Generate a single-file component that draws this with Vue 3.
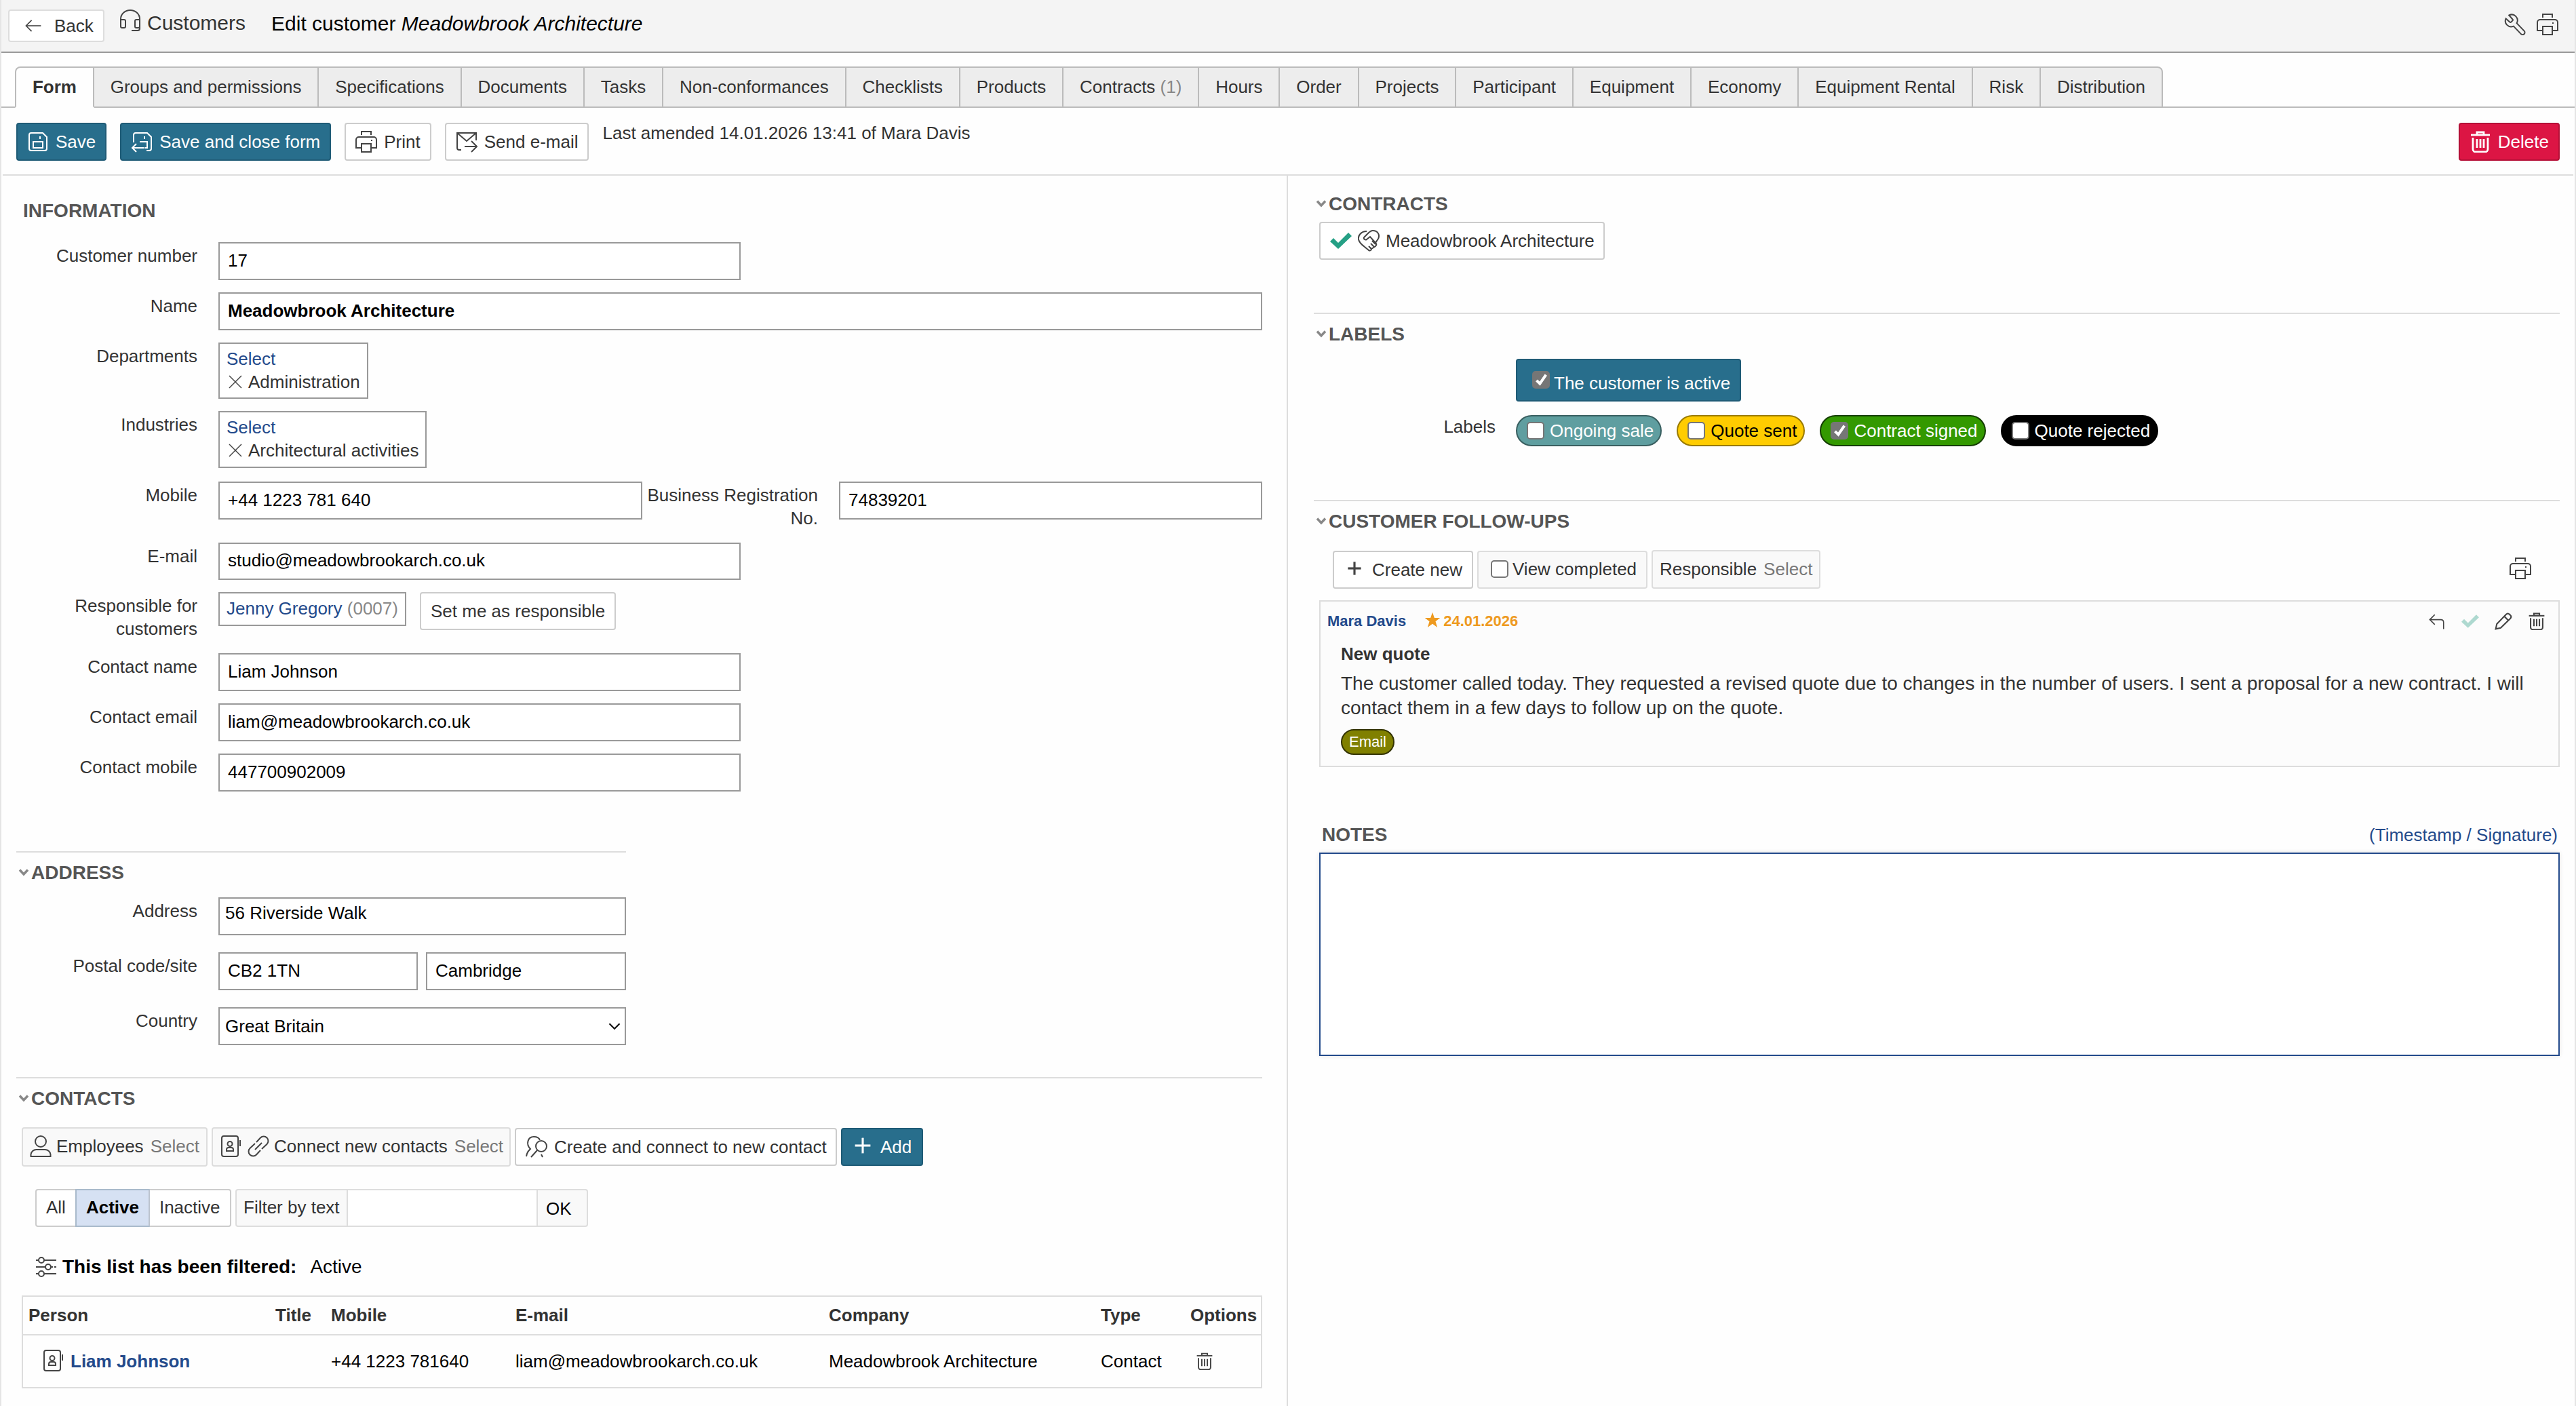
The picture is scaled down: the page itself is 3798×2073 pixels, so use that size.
<template>
  <div class="page">
    <header class="topbar">
      <button class="back-btn"><Icon name="back" :size="26" /><span>Back</span></button>
      <Icon name="headset" class="module-icon" />
      <span class="module">Customers</span>
      <span class="page-title">Edit customer <em>Meadowbrook Architecture</em></span>
      <div class="top-tools">
        <Icon name="wrench" />
        <Icon name="printer" />
      </div>
    </header>

    <nav class="tabs">
      <div v-for="(tab, i) in tabs" :key="tab.title" class="tab" :class="{ active: i === 0 }">
        {{ tab.title }}<span v-if="tab.count" class="count">&nbsp;({{ tab.count }})</span>
      </div>
    </nav>

    <div class="toolbar">
      <button class="btn primary"><Icon name="save" />Save</button>
      <button class="btn primary"><Icon name="saveClose" />Save and close form</button>
      <button class="btn"><Icon name="printer" />Print</button>
      <button class="btn"><Icon name="send" />Send e-mail</button>
      <span class="amended">Last amended 14.01.2026 13:41 of Mara Davis</span>
      <button class="btn danger"><Icon name="trash" :stroke="2.8" />Delete</button>
    </div>

    <div class="columns">
      <main class="col left">
        <h2 class="plain-title">INFORMATION</h2>
        <div class="row">
          <label>Customer number</label>
          <input class="w-half" v-model="form.number" />
        </div>
        <div class="row">
          <label>Name</label>
          <input class="w-full strong" v-model="form.name" />
        </div>
        <div class="row">
          <label>Departments</label>
          <div class="picker departments">
            <a>Select</a>
            <div class="picked"><Icon name="cross" :size="24" />Administration</div>
          </div>
        </div>
        <div class="row industries-row">
          <label>Industries</label>
          <div class="picker industries">
            <a>Select</a>
            <div class="picked"><Icon name="cross" :size="24" />Architectural activities</div>
          </div>
        </div>
        <div class="row">
          <label>Mobile</label>
          <input class="w-mobile" v-model="form.mobile" />
          <label class="second">Business Registration No.</label>
          <input class="w-reg" v-model="form.regNo" />
        </div>
        <div class="row">
          <label>E-mail</label>
          <input class="w-half short" v-model="form.email" />
        </div>
        <div class="row">
          <label>Responsible for customers</label>
          <div class="picker responsible"><a>Jenny Gregory</a> <span class="muted">(0007)</span></div>
          <button class="btn set-me">Set me as responsible</button>
        </div>
        <div class="row">
          <label>Contact name</label>
          <input class="w-half" v-model="form.contactName" />
        </div>
        <div class="row">
          <label>Contact email</label>
          <input class="w-half" v-model="form.contactEmail" />
        </div>
        <div class="row">
          <label>Contact mobile</label>
          <input class="w-half" v-model="form.contactMobile" />
        </div>

        <section class="address">
          <h2><Icon name="fold" :size="16" :stroke="7" />ADDRESS</h2>
          <div class="row">
            <label>Address</label>
            <textarea class="street" v-model="form.street"></textarea>
          </div>
          <div class="row">
            <label>Postal code/site</label>
            <input class="w-postal" v-model="form.postal" />
            <input class="w-city" v-model="form.city" />
          </div>
          <div class="row">
            <label>Country</label>
            <div class="select">{{ form.country }}<Icon name="down" :size="20" :stroke="3.4" /></div>
          </div>
        </section>

        <section class="contacts">
          <h2><Icon name="fold" :size="16" :stroke="7" />CONTACTS</h2>
          <div class="contact-tools">
            <div class="chip employees"><Icon name="user" />Employees <span class="pick">Select</span></div>
            <div class="chip connect">
              <Icon name="card" /><Icon name="link" />Connect new contacts <span class="pick">Select</span>
            </div>
            <button class="btn create"><Icon name="people" />Create and connect to new contact</button>
            <button class="btn primary add"><Icon name="plus" :size="26" :stroke="3.8" />Add</button>
          </div>
          <div class="filters">
            <div class="segments">
              <span>All</span>
              <span class="on">Active</span>
              <span>Inactive</span>
            </div>
            <div class="filter-box">
              <span class="filter-label">Filter by text</span>
              <span class="filter-input"></span>
              <span class="filter-ok">OK</span>
            </div>
          </div>
          <div class="filtered"><Icon name="sliders" /><b>This list has been filtered:</b><span>Active</span></div>

          <div class="table">
            <div class="tr th">
              <span v-for="c in columns" :key="c">{{ c }}</span>
            </div>
            <div class="tr">
              <span class="person"><Icon name="card" /><a>Liam Johnson</a></span>
              <span></span>
              <span>+44 1223 781640</span>
              <span>liam@meadowbrookarch.co.uk</span>
              <span>Meadowbrook Architecture</span>
              <span>Contact</span>
              <span class="options"><Icon name="trash" :size="26" :stroke="2.3" /></span>
            </div>
          </div>
        </section>
      </main>

      <aside class="col right">
        <h2 class="first"><Icon name="fold" :size="16" :stroke="7" />CONTRACTS</h2>
        <button class="btn contract">
          <Icon name="tick" class="tick" /><Icon name="handshake" />Meadowbrook Architecture
        </button>

        <section class="labels">
          <h2><Icon name="fold" :size="16" :stroke="7" />LABELS</h2>
          <div class="is-active">
            <span class="box checked"><Icon name="check" :size="26" :stroke="5" /></span>
            <span class="is-active-text">The customer is active</span>
          </div>
          <div class="label-row">
            <label>Labels</label>
            <div v-for="l in labels" :key="l.title" class="pill" :class="l.kind">
              <span class="box" :class="{ checked: l.checked }"><Icon v-if="l.checked" name="check" :size="26" :stroke="5" /></span>{{ l.title }}
            </div>
          </div>
        </section>

        <section class="follow-ups">
          <h2><Icon name="fold" :size="16" :stroke="7" />CUSTOMER FOLLOW-UPS</h2>
          <div class="follow-tools">
            <button class="btn create-new"><Icon name="plus" :size="22" :stroke="4.6" />Create new</button>
            <div class="chip view-completed"><span class="box"></span>View completed</div>
            <div class="chip resp">Responsible <span class="pick">Select</span></div>
            <Icon name="printer" class="follow-print" />
          </div>
          <article class="card">
            <div class="card-head">
              <a>Mara Davis</a>
              <Icon name="star" :size="24" class="star" />
              <span class="date">24.01.2026</span>
              <div class="card-icons">
                <Icon name="reply" :size="26" />
                <Icon name="tick" :size="26" class="tick faded" />
                <Icon name="pencil" :size="26" :stroke="2.6" />
                <Icon name="trash" :size="26" :stroke="2.6" />
              </div>
            </div>
            <div class="card-title">New quote</div>
            <p>The customer called today. They requested a revised quote due to changes in the number of users. I sent a proposal for a new contract. I will contact them in a few days to follow up on the quote.</p>
            <span class="tag">Email</span>
          </article>
        </section>

        <div class="notes-head">
          <h2>NOTES</h2>
          <a>(Timestamp / Signature)</a>
        </div>
        <textarea class="notes"></textarea>
      </aside>
    </div>
  </div>
</template>

<script setup>
import { h, reactive } from 'vue';

// All icons share a 32x32 grid
const shapes = {
  back: ['M3 16h27', 'M13 6L3 16l10 10'],
  headset: ['M2 15v-1a14 13 0 0 1 28 0v1', 'M2 15h5a2 2 0 0 1 2 2v8a2 2 0 0 1-2 2H4a2 2 0 0 1-2-2z', 'M30 15h-5a2 2 0 0 0-2 2v8a2 2 0 0 0 2 2h3a2 2 0 0 0 2-2z', 'M30 25v3a3 3 0 0 1-3 3h-9'],
  wrench: ['M12.5 8.5a1.4 1.4 0 0 1 0 1.9l-2.2 2.1a1.4 1.4 0 0 1-1.9 0L2.6 7.4a8.5 8.5 0 0 0 11.3 11.2l11 11.5a3.2 3.2 0 0 0 4.7-4.5L18.6 14.2A8.5 8.5 0 0 0 7.3 2.5z'],
  printer: ['M9 6V1h14v5', 'M9 25H1V13a4 4 0 0 1 4-4h22a4 4 0 0 1 4 4v12h-8', 'M9 19h14v12H9z', 'M23 14h2'],
  save: ['M6 3h17l6 6v17a3 3 0 0 1-3 3H6a3 3 0 0 1-3-3V6a3 3 0 0 1 3-3z', 'M9 25v-9h14v9z', 'M19 8v4'],
  saveClose: ['M4 17V6a3 3 0 0 1 3-3h17l6 6v17a3 3 0 0 1-3 3h-4', 'M13 16h11v9h-4', 'M20 8v4', 'M19 25H2', 'M8 19l-6 6 6 6'],
  send: ['M30 14V3H2v22a3 3 0 0 0 3 3h3', 'M2 3l14 12L30 3', 'M13 23h18', 'M23 15l8 8-8 8'],
  trash: ['M11 6V2h10v4', 'M2 6h28', 'M5 10v17a4 4 0 0 0 4 4h14a4 4 0 0 0 4-4V10', 'M11 12v13M16 12v13M21 12v13'],
  cross: ['M4 4l24 24', 'M28 4L4 28'],
  fold: ['M4 9l12 13L28 9'],
  down: ['M4 10l12 12 12-12'],
  user: ['M16 1a8 8 0 1 1 0 16 8 8 0 1 1 0-16z', 'M1.5 31v-3a8 8 0 0 1 8-7h13a8 8 0 0 1 8 7v3z'],
  card: ['M4 1h18a3 3 0 0 1 3 3v24a3 3 0 0 1-3 3H4a3 3 0 0 1-3-3V4a3 3 0 0 1 3-3z', 'M13 9a3.5 3.5 0 1 1 0 7 3.5 3.5 0 1 1 0-7z', 'M8 23v-2a3 3 0 0 1 3-3h4a3 3 0 0 1 3 3v2z', 'M28 7v9'],
  link: ['M13 10l6-6.500a6.500 6.500 0 0 1 9.500 9.500L21 20', 'M19 22l-6 6.500a6.500 6.500 0 0 1-9.500-9.500L11 12', 'M11 21L21 11'],
  people: ['M1 30c1-6 3-8 6-11C0 12 3 1 12 1c5 0 8 2 9 5', 'M23 7a8 8 0 1 1 0 16 8 8 0 1 1 0-16z', 'M17 21L8 31', 'M23 27l2 4'],
  plus: ['M16 2v28', 'M2 16h28'],
  sliders: ['M1 6h4M13 6h18', 'M9 2a4 4 0 1 1 0 8 4 4 0 1 1 0-8z', 'M1 16h14M23 16h3M28 16h3', 'M19 12a4 4 0 1 1 0 8 4 4 0 1 1 0-8z', 'M1 26h4M13 26h18', 'M9 22a4 4 0 1 1 0 8 4 4 0 1 1 0-8z'],
  handshake: ['M13 2C5 2 0 8 1 14c1 5 5 8 9 11l6 5c2 1 4 0 4-2l6-4c2-2 1-4 0-5l4-6c3-6-1-12-8-12-3 0-5 2-7 4l-6 6c-1 3 2 4 4 3l5-4 8 9', 'M20 28l-4-4M24 25l-5-5M26 21l-5-5'],
  check: ['M8 17l6 6L25 7'],
  reply: ['M12 4L3 13l9 9', 'M3 13h20q5 0 5 5v12'],
  pencil: ['M2 30l2-9L21 3.5q3-3 6 0l1.500 1.500q3 3 0 6L11 28z', 'M17.5 7l7.500 7.500'],
};

// Solid icons are filled instead of stroked
const solids = {
  tick: 'M0 17l5-5 7 7L27 4l5 5-20 19z',
  star: 'M16 1l3.8 11H31l-9 7 3.5 11.5L16 23.5 6.5 30.5 10 19l-9-7h11.2z',
};

const Icon = (props) =>
  h(
    'svg',
    {
      class: 'icon',
      viewBox: '0 0 32 32',
      width: props.size || 32,
      height: props.size || 32,
      fill: 'none',
      stroke: 'currentColor',
      'stroke-width': props.stroke || 2,
    },
    solids[props.name]
      ? [h('path', { d: solids[props.name], fill: 'currentColor', stroke: 'none' })]
      : shapes[props.name].map((d) => h('path', { d }))
  );
Icon.props = ['name', 'size', 'stroke'];

const tabs = [
  { title: 'Form' },
  { title: 'Groups and permissions' },
  { title: 'Specifications' },
  { title: 'Documents' },
  { title: 'Tasks' },
  { title: 'Non-conformances' },
  { title: 'Checklists' },
  { title: 'Products' },
  { title: 'Contracts', count: 1 },
  { title: 'Hours' },
  { title: 'Order' },
  { title: 'Projects' },
  { title: 'Participant' },
  { title: 'Equipment' },
  { title: 'Economy' },
  { title: 'Equipment Rental' },
  { title: 'Risk' },
  { title: 'Distribution' },
];

const form = reactive({
  number: '17',
  name: 'Meadowbrook Architecture',
  mobile: '+44 1223 781 640',
  regNo: '74839201',
  email: 'studio@meadowbrookarch.co.uk',
  contactName: 'Liam Johnson',
  contactEmail: 'liam@meadowbrookarch.co.uk',
  contactMobile: '447700902009',
  street: '56 Riverside Walk',
  postal: 'CB2 1TN',
  city: 'Cambridge',
  country: 'Great Britain',
});

const columns = ['Person', 'Title', 'Mobile', 'E-mail', 'Company', 'Type', 'Options'];

const labels = [
  { title: 'Ongoing sale', kind: 'teal', checked: false },
  { title: 'Quote sent', kind: 'yellow', checked: false },
  { title: 'Contract signed', kind: 'green', checked: true },
  { title: 'Quote rejected', kind: 'black', checked: false },
];
</script>

<style>
body {
  background: #fff;
}
</style>

<style scoped>
.page,
.page * {
  box-sizing: border-box;
}

.page {
  display: flex;
  flex-direction: column;
  width: 3798px;
  height: 2073px;
  overflow: hidden;
  border-left: 2px solid #e5e5e5;
  border-right: 2px solid #e5e5e5;
  background: #fefefe;
  color: #333;
  font-family: "Liberation Sans", Arial, Helvetica, sans-serif;
  font-size: 26px;
  line-height: 34px;
}

.icon {
  display: block;
  flex-shrink: 0;
  color: #444;
}

button,
input,
textarea {
  margin: 0;
  font: inherit;
  color: inherit;
}

a {
  color: #234a8b;
}

h2 {
  display: flex;
  align-items: center;
  margin: 0;
  color: #555;
  font-size: 28px;
  font-weight: bold;
  line-height: 34px;
}

h2 .icon {
  margin: -3px 3px 0 3px;
  color: #888;
}

/* Header */
.topbar {
  display: flex;
  align-items: flex-start;
  height: 78px;
  padding: 14px 24px 0 10px;
  border-bottom: 2px solid #999;
  background: #f4f4f4;
}

.back-btn {
  display: flex;
  align-items: center;
  gap: 18px;
  width: 142px;
  height: 48px;
  padding: 0 0 0 22px;
  border: 2px solid #ddd;
  border-radius: 4px;
  background: #fff;
}

.module-icon {
  margin-left: 22px;
}

.module {
  margin: 3px 0 0 9px;
  font-size: 30px;
}

.page-title {
  margin: 4px 0 0 38px;
  color: #000;
  font-size: 30px;
}

.top-tools {
  display: flex;
  gap: 16px;
  margin: 6px 0 0 auto;
}

/* Tabs */
.tabs {
  display: flex;
  height: 81px;
  padding: 20px 0 0 20px;
  background: linear-gradient(#bbb, #bbb) 0 79px / 100% 2px no-repeat;
}

.tab {
  height: 61px;
  padding: 11px 23.9px 0;
  border: solid #bbb;
  border-width: 2px 2px 2px 0;
  background: #ededed;
  white-space: nowrap;
}

.tab.active {
  border-left-width: 2px;
  border-bottom-color: #fefefe;
  border-radius: 8px 0 0 0;
  background: #fefefe;
  font-weight: bold;
}

.tab:last-child {
  border-radius: 0 8px 0 0;
}

.count {
  color: #888;
}

/* Buttons */
.btn {
  display: flex;
  align-items: center;
  height: 56px;
  padding: 0 14px;
  border: 2px solid #ccc;
  border-radius: 4px;
  background: #fff;
  white-space: nowrap;
}

.primary {
  border-color: #1f5b76;
  background: #286e8c;
  color: #fff;
}

.danger {
  border-color: #b50f37;
  background: #dc1544;
  color: #fff;
}

.primary .icon,
.danger .icon {
  color: #fff;
}

.toolbar {
  display: flex;
  height: 100px;
  margin: 0 2px;
  padding: 22px 20px 0;
  border-bottom: 2px solid #ddd;
}

.toolbar .btn {
  margin-right: 20px;
}

.toolbar .icon {
  margin-right: 10px;
}

.amended {
  line-height: 31px;
}

.toolbar .danger {
  margin: 0 0 0 auto;
}

/* Columns */
.columns {
  display: flex;
  flex: 1;
}

.left {
  width: 1897px;
  padding: 35px 0 0 22px;
  border-right: 2px solid #ddd;
}

.right {
  width: 1897px;
  padding: 25px 22px 0 38px;
}

.plain-title {
  margin: 0 0 29px 10px;
}

.row {
  display: flex;
  align-items: flex-start;
  margin-bottom: 18px;
}

.row label {
  width: 260px;
  margin: 0 31px 0 7px;
  padding: 3px 0 1px;
  text-align: right;
}

.row label.second {
  width: 259px;
  margin: 0 31px 0 0;
}

input {
  height: 56px;
  padding: 0 12px 2px;
  border: 2px solid #999;
  border-radius: 0;
  background: #fff;
  color: #000;
  outline: none;
}

.strong {
  font-weight: bold;
}

.short {
  height: 55px;
}

.w-half {
  width: 770px;
}

.w-full {
  width: 1539px;
}

.w-mobile {
  width: 625px;
}

.w-reg {
  width: 624px;
}

.w-postal {
  width: 294px;
}

.w-city {
  width: 295px;
  margin-left: 12px;
}

.picker {
  padding: 5px 10px 0;
  border: 2px solid #999;
  background: #fff;
  white-space: nowrap;
}

.picked {
  display: flex;
  align-items: center;
}

.picked .icon {
  margin: 0 7px 0 1px;
}

.departments {
  width: 221px;
  height: 83px;
}

.industries {
  width: 307px;
  height: 84px;
}

.industries-row {
  margin-bottom: 20px;
}

.responsible {
  width: 277px;
  height: 50px;
}

.muted {
  color: #888;
}

.set-me {
  width: 289px;
  margin-left: 20px;
  padding-top: 0;
}

.left section,
.right section {
  border-top: 2px solid #ddd;
}

section h2 {
  padding-top: 13px;
}

.address {
  width: 899px;
  margin-top: 88px;
}

.address .row {
  margin-bottom: 25px;
}

.address h2 {
  margin-bottom: 19px;
}

.street {
  width: 601px;
  height: 56px;
  padding: 4px 8px;
  border: 2px solid #999;
  background: #fff;
  color: #000;
  resize: none;
  overflow: hidden;
}

.select {
  display: flex;
  align-items: center;
  justify-content: space-between;
  width: 601px;
  height: 56px;
  padding: 0 5px 0 8px;
  border: 2px solid #999;
  background: #fff;
  color: #000;
}

.select .icon {
  color: #111;
}

/* Contacts */
.contacts {
  width: 1837px;
  margin-top: 47px;
}

.contact-tools {
  display: flex;
  align-items: center;
  gap: 6px;
  margin: 25px 0 0 8px;
}

.chip {
  display: flex;
  align-items: center;
  height: 58px;
  border: 2px solid #ddd;
  border-radius: 4px;
  background: #f9f9f9;
  white-space: nowrap;
}

.pick {
  margin-left: 10px;
  color: #777;
}

.employees {
  width: 274px;
  padding: 0 0 2px 10px;
}

.employees .icon {
  margin-right: 7px;
}

.connect {
  width: 441px;
  padding: 0 0 2px 12px;
}

.connect .icon {
  margin-right: 7px;
}

.create {
  width: 475px;
}

.create .icon {
  margin-right: 10px;
}

.add {
  width: 121px;
  padding-left: 17px;
}

.add .icon {
  margin: -4px 13px 0 0;
}

.filters {
  display: flex;
  gap: 6px;
  height: 56px;
  margin: 33px 0 0 28px;
}

.segments {
  display: flex;
  width: 289px;
  border: 2px solid #ccc;
  border-radius: 4px;
  background: #fff;
}

.segments span {
  margin: -2px 0;
  padding: 10px 14px 0;
}

.segments .on {
  width: 110px;
  border: 2px solid #a9bacb;
  border-right-color: #bcc4cf;
  background: #d6e1f3;
  color: #000;
  font-weight: bold;
  padding-top: 8px;
}

.filter-box {
  display: flex;
  width: 520px;
  border: 2px solid #ddd;
  border-radius: 4px;
  background: #f9f9f9;
}

.filter-label {
  width: 162px;
  padding: 8px 0 0 10px;
}

.filter-input {
  width: 282px;
  border: 2px solid #ddd;
  border-width: 0 2px;
  background: #fff;
}

.filter-ok {
  padding: 10px 0 0 12px;
  color: #000;
}

.filtered {
  display: flex;
  align-items: center;
  margin: 42px 0 25px 28px;
  color: #000;
  font-size: 28px;
}

.filtered b {
  margin: 0 20px 0 8px;
}

.table {
  width: 1829px;
  margin-left: 8px;
  border: 2px solid #ddd;
}

.tr {
  display: grid;
  grid-template-columns: 364px 82px 272px 462px 401px 132px auto;
  align-items: center;
  height: 76px;
  padding-left: 8px;
  color: #000;
  white-space: nowrap;
}

.th {
  height: 57px;
  border-bottom: 2px solid #ddd;
  color: #333;
  font-weight: bold;
}

.th span {
  margin-top: -1px;
}

.person {
  display: flex;
  gap: 8px;
  padding-left: 22px;
  font-weight: bold;
}

.options {
  padding-left: 8px;
}

/* Right column */
.first {
  margin-bottom: 9px;
}

.contract {
  width: 421px;
  margin: 0 0 78px 8px;
}

.contract .icon {
  margin-right: 9px;
}

.icon.tick {
  color: #25a085;
}

.icon.faded {
  color: #aed9d0;
}

.is-active {
  display: flex;
  width: 332px;
  height: 63px;
  margin: 19px 0 20px 298px;
  padding: 16px 0 0 22px;
  border: 2px solid #1f5b76;
  border-radius: 4px;
  background: #286e8c;
  color: #fff;
}

.is-active-text {
  margin-left: 6px;
  padding-top: 1px;
}

.box {
  flex-shrink: 0;
  width: 26px;
  height: 26px;
  border: 2px solid #767676;
  border-radius: 5px;
  background: #fff;
}

.box.checked {
  background: #767676;
}

.box .icon {
  margin: -2px;
  color: #fff;
}

.label-row {
  display: flex;
  gap: 22px;
  margin-bottom: 79px;
}

.label-row label {
  width: 268px;
  margin-right: 8px;
  text-align: right;
}

.pill {
  display: flex;
  align-items: center;
  height: 46px;
  padding: 0 10px 1px 14px;
  border: 2px solid #000;
  border-radius: 23px;
  color: #fff;
}

.pill .box {
  margin-right: 8px;
}

.teal {
  border-color: #395f60;
  background: #5f9ea0;
}

.yellow {
  border-color: #997a00;
  background: #fc0;
  color: #000;
}

.green {
  border-color: #143d00;
  background: #390;
}

.black {
  background: #000;
}

.follow-tools {
  display: flex;
  align-items: flex-end;
  gap: 6px;
  height: 57px;
  margin: 25px 0 17px 28px;
}

.create-new {
  width: 207px;
  padding-left: 19px;
}

.create-new .icon {
  margin: -4px 15px 0 0;
}

.view-completed {
  width: 251px;
  height: 56px;
  padding: 0 0 2px 18px;
}

.view-completed .box {
  margin-right: 6px;
}

.resp {
  width: 249px;
  height: 57px;
  padding: 0 0 2px 10px;
}

.follow-print {
  margin: 0 42px 14px auto;
}

.card {
  height: 246px;
  margin-left: 8px;
  padding: 15px 19px 0 30px;
  border: 2px solid #ddd;
  background: #fcfcfc;
}

.card-head {
  display: flex;
  align-items: center;
  height: 28px;
  margin-left: -20px;
  font-size: 22px;
  font-weight: bold;
  line-height: 28px;
}

.card-head .star {
  margin: -4px 4px 0 27px;
  color: #ee9a1f;
}

.date {
  color: #ee9a1f;
}

.card-icons {
  display: flex;
  gap: 23px;
  margin-left: auto;
}

.card-title {
  margin-top: 17px;
  font-weight: bold;
}

.card p {
  margin: 9px 0 13px;
  font-size: 28px;
  line-height: 36px;
}

.tag {
  display: block;
  width: 79px;
  height: 38px;
  border: 2px solid #330;
  border-radius: 19px;
  background: #808000;
  color: #fff;
  font-size: 22px;
  line-height: 34px;
  text-align: center;
}

.notes-head {
  display: flex;
  justify-content: space-between;
  margin: 83px 3px 9px 12px;
}

.notes {
  display: block;
  width: 1829px;
  height: 300px;
  margin-left: 8px;
  border: 2px solid #234a8b;
  background: #fff;
  box-shadow: 0 0 6px rgba(0, 0, 0, 0.12);
  resize: none;
}
</style>
